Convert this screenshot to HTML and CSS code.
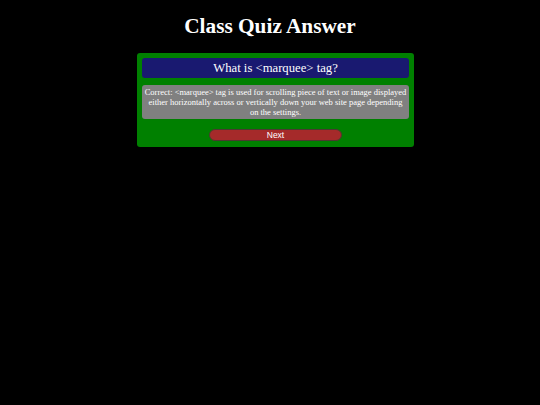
FILE: index.html
```html
<!DOCTYPE html>
<html>
<head>
<meta charset="utf-8">
<link rel="stylesheet" href="styles.css">
</head>
<body>
<h1 class="title">Class Quiz Answer</h1>
<div class="quiz">
  <div class="question">What is &lt;marquee&gt; tag?</div>
  <div class="answer">Correct: &lt;marquee&gt; tag is used for scrolling piece of text or image displayed either horizontally across or vertically down your web site page depending on the settings.</div>
  <button class="next">Next</button>
</div>
</body>
</html>
```
FILE: styles.css
```css
html, body {
  margin: 0;
  padding: 0;
  background: #000;
  height: 100%;
}
body {
  font-family: "Liberation Serif", "Times New Roman", serif;
  color: #fff;
}
.title {
  margin: 0;
  padding-top: 14px;
  height: 39px;
  box-sizing: border-box;
  text-align: center;
  font-size: 21.3px;
  line-height: 25px;
  font-weight: bold;
}
.quiz {
  width: 277px;
  box-sizing: border-box;
  margin-left: calc(50% - 133px);
  margin-top: 14px;
  background: #008000;
  border-radius: 3px;
  padding: 5px 5px 6px;
  display: flex;
  flex-direction: column;
  align-items: center;
}
.question {
  align-self: stretch;
  background: #191970;
  border-radius: 3px;
  height: 20px;
  text-align: center;
  font-size: 12.7px;
  line-height: 20px;
}
.answer {
  align-self: stretch;
  margin-top: 7px;
  background: #808080;
  border-radius: 3px;
  padding: 2px 2px 2px;
  text-align: center;
  font-size: 8.5px;
  line-height: 10px;
}
.next {
  margin-top: 10px;
  width: 133px;
  height: 12px;
  padding: 0;
  background: #a52a2a;
  border: 1px solid #4a3a30;
  border-radius: 6px;
  color: #fff;
  font-family: "Liberation Sans", Arial, sans-serif;
  font-size: 8.5px;
  line-height: 10px;
}
```
